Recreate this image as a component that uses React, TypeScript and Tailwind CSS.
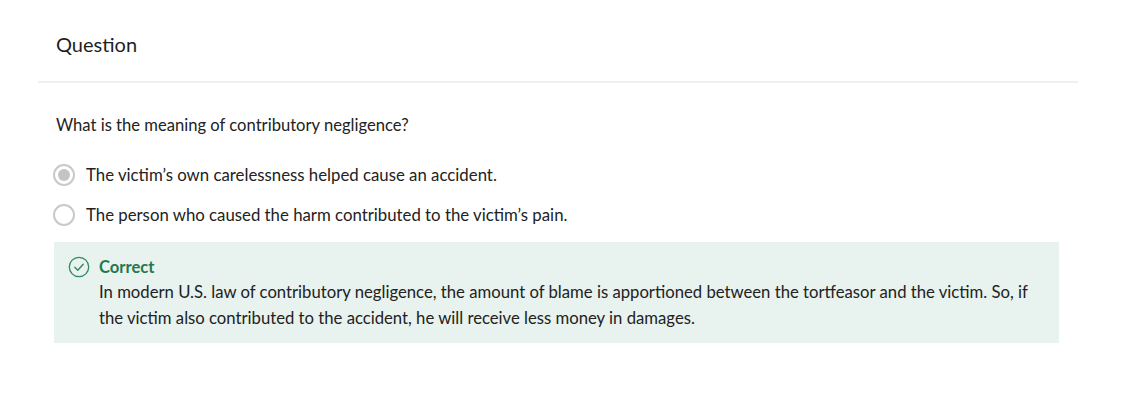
import React from "react";

const options = [
  { id: 1, label: "The victim\u2019s own carelessness helped cause an accident.", selected: true },
  { id: 2, label: "The person who caused the harm contributed to the victim\u2019s pain.", selected: false },
];

export default function App() {
  return (
    <div className="min-h-screen bg-white text-[#222] font-['Lato','Noto_Sans',sans-serif]">
      {/* Header */}
      <div className="ml-[38px] w-[1040px]">
        <div className="h-[83px] border-b-2 border-[#efefef] flex items-center px-[18px] pt-[6px]">
          <h1 className="text-[20px] text-[#1f1f1f]">Question</h1>
        </div>
      </div>

      <div className="pl-[56px] pr-[62px] pt-[29px]">
        <p className="text-[16.6px] leading-[26px]">What is the meaning of contributory negligence?</p>

        <div className="mt-[24px] flex flex-col gap-[14px]">
          {options.map((o) => (
            <label key={o.id} className="flex items-center gap-[11px] ml-[-3px] h-[26px]">
              <span className="w-[22px] h-[22px] rounded-full border-2 border-[#c9c9c9] flex items-center justify-center">
                {o.selected && <span className="w-[12px] h-[12px] rounded-full bg-[#c4c4c4]" />}
              </span>
              <span className="text-[16.8px]">{o.label}</span>
            </label>
          ))}
        </div>

        {/* Feedback */}
        <div className="mt-[14px] ml-[-2px] bg-[#e8f2ee] pl-[14px] pr-[20px] pt-[13px] pb-[12px] flex gap-[9px]">
          <svg width="22" height="22" viewBox="0 0 22 22" className="mt-[1px] shrink-0">
            <circle cx="11" cy="11" r="9.7" fill="none" stroke="#2f8a5e" strokeWidth="1.3" />
            <path d="M6.8 11.3 L9.8 14.2 L15.2 8.3" fill="none" stroke="#2f8a5e" strokeWidth="1.4" strokeLinecap="round" strokeLinejoin="round" />
          </svg>
          <div>
            <div className="text-[16.6px] font-bold text-[#1d7a50] leading-[24px]">Correct</div>
            <p className="text-[16.7px] leading-[26px]">
              In modern U.S. law of contributory negligence, the amount of blame is apportioned between the tortfeasor and the victim. So, if the victim also contributed to the accident, he will receive less money in damages.
            </p>
          </div>
        </div>
      </div>
    </div>
  );
}
